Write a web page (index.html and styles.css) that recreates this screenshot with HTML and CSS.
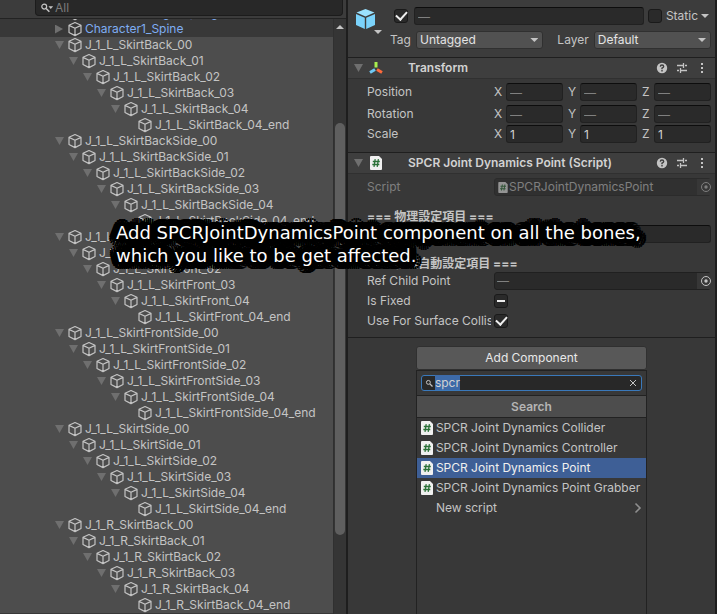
FILE: index.html
```html
<!DOCTYPE html>
<html lang="en">
<head>
<meta charset="utf-8">
<title>Hierarchy and Inspector</title>
<link rel="stylesheet" href="styles.css">
</head>
<body>
<svg class="sprites" aria-hidden="true">
  <symbol id="cube" viewBox="0 0 16 16"><path d="M8 1.5 14 4.2V11.5L8 14.6 2 11.5V4.2ZM2 4.4 8 7.3 14 4.4M8 7.3V14.4" fill="none" stroke="currentColor" stroke-width="1.2" stroke-linejoin="round"/></symbol>
  <symbol id="lens" viewBox="0 0 12 12"><circle cx="4.5" cy="4.5" r="2.6" fill="none" stroke="currentColor" stroke-width="1.3"/><path d="M6.5 6.5 10 10" stroke="currentColor" stroke-width="1.7"/></symbol>
  <symbol id="script" viewBox="0 0 12 14"><path d="M1 0H9L12 3V13Q12 14 11 14H1Q0 14 0 13V1Q0 0 1 0Z" fill="#f0f0f0"/><path d="M5.2 3.2 4 10.8M8.4 3.2 7.2 10.8M2.8 5.5H9.8M2.3 8.5H9.3" stroke="#2b7138" stroke-width="1.3"/></symbol>
  <symbol id="help" viewBox="0 0 12 12"><circle cx="6" cy="6" r="5.2" fill="#c4c4c4"/><path d="M4.3 4.6Q4.4 3 6 3T7.7 4.6Q7.7 5.5 6 6.2V7.3M6 8.1V9.4" fill="none" stroke="#3e3e3e" stroke-width="1.4"/></symbol>
  <symbol id="preset" viewBox="0 0 12 12"><path d="M1 3.5H7M9 3.5H11M7.5 1V6M1 8.5H3M5 8.5H11M4.5 6V11" stroke="#c4c4c4" stroke-width="1.3"/></symbol>
  <symbol id="dots" viewBox="0 0 12 12"><path d="M5 1H7V3H5ZM5 5H7V7H5ZM5 9H7V11H5Z" fill="#c4c4c4"/></symbol>
  <symbol id="target" viewBox="0 0 10 10"><circle cx="5" cy="5" r="4.5" fill="none" stroke="currentColor"/><circle cx="5" cy="5" r="1.7" fill="currentColor"/></symbol>
</svg>
<div class="editor">
  <section class="hierarchy" aria-label="Hierarchy">
    <div class="toolbar">
      <label class="filter">
        <svg class="lens" viewBox="0 0 16 12" aria-hidden="true"><use href="#lens" width="12" height="12"/><path d="M9 4H14L11.500 7Z" fill="currentColor"/></svg>
        <input type="text" placeholder="All" aria-label="Filter objects">
      </label>
    </div>
    <div class="treewrap">
      <div class="treeview"><ul class="tree" id="tree"></ul></div>
      <div class="scrollbar" aria-hidden="true"><span class="up"></span><span class="thumb"></span></div>
    </div>
  </section>

  <section class="inspector" aria-label="Inspector">
    <header class="object">
      <div class="objicon">
        <svg class="bigcube" viewBox="0 0 20 22" aria-hidden="true"><path d="M10 1 19 4.500 10 8.500 1 4.500Z" fill="#9be2ff"/><path d="M0.500 6 9.300 9.800V21L0.500 17Z M19.500 6 10.700 9.800V21L19.500 17Z" fill="#7bd3fb"/></svg>
        <span class="caret"></span>
      </div>
      <div class="objlines">
        <div class="line">
          <input type="checkbox" checked aria-label="Active">
          <input class="field grow" type="text" placeholder="—" aria-label="Name">
          <label class="static"><input type="checkbox"><span>Static</span></label>
          <span class="caret"></span>
        </div>
        <div class="line selects">
          <label for="tag">Tag</label>
          <span class="drop tag"><select id="tag"><option>Untagged</option></select></span>
          <label class="layerlabel" for="layer">Layer</label>
          <span class="drop"><select id="layer"><option>Default</option></select></span>
        </div>
      </div>
    </header>

    <article>
      <header class="comp">
        <span class="fold"></span>
        <svg class="axes" viewBox="0 0 14 14" aria-hidden="true"><path d="M7 1V6.500" stroke="#a8ee4e" stroke-width="3"/><path d="M6 8.500 1 11.500" stroke="#6fc8f5" stroke-width="3"/><path d="M8 8.500 13 11.500" stroke="#ff6a3c" stroke-width="3"/></svg>
        <h2>Transform</h2>
        <svg class="tool"><use href="#help"/></svg><svg class="tool"><use href="#preset"/></svg><svg class="tool"><use href="#dots"/></svg>
      </header>
      <div class="props">
        <div class="prop pos"><span class="name">Position</span><div class="vec">
          <label>X<input class="field" placeholder="—"></label><label>Y<input class="field" placeholder="—"></label><label>Z<input class="field" placeholder="—"></label></div></div>
        <div class="prop"><span class="name">Rotation</span><div class="vec">
          <label>X<input class="field" placeholder="—"></label><label>Y<input class="field" placeholder="—"></label><label>Z<input class="field" placeholder="—"></label></div></div>
        <div class="prop"><span class="name">Scale</span><div class="vec">
          <label>X<input class="field" value="1"></label><label>Y<input class="field" value="1"></label><label>Z<input class="field" value="1"></label></div></div>
      </div>
    </article>

    <article>
      <header class="comp">
        <span class="fold"></span>
        <svg class="doc" aria-hidden="true"><use href="#script"/></svg>
        <h2>SPCR Joint Dynamics Point (Script)</h2>
        <svg class="tool"><use href="#help"/></svg><svg class="tool"><use href="#preset"/></svg><svg class="tool"><use href="#dots"/></svg>
      </header>
      <div class="props last">
        <div class="prop disabled"><label class="name" for="script-ref">Script</label>
          <div class="ref"><svg class="mini" aria-hidden="true"><use href="#script"/></svg><input id="script-ref" value="SPCRJointDynamicsPoint" disabled><svg class="pick" aria-hidden="true"><use href="#target"/></svg></div></div>
        <h3>=== 物理設定項目 ===</h3>
        <div class="prop"><label class="name" for="mass">Mass</label><input class="field grow" id="mass"></div>
        <h3>=== 物理自動設定項目 ===</h3>
        <div class="prop"><label class="name" for="child">Ref Child Point</label>
          <div class="ref"><input id="child" placeholder="—"><svg class="pick" aria-hidden="true"><use href="#target"/></svg></div></div>
        <div class="prop"><label class="name" for="fixed">Is Fixed</label><input class="mixed" id="fixed" type="checkbox"></div>
        <div class="prop"><label class="name" for="surface">Use For Surface Collision</label><input id="surface" type="checkbox" checked></div>
      </div>
    </article>

    <div class="adder">
      <button class="add" type="button">Add Component</button>
      <div class="popup">
        <div class="searchrow"><label class="search"><svg class="glass" aria-hidden="true"><use href="#lens"/></svg><span class="query" contenteditable="true" role="textbox" aria-label="Search components"><mark>spcr</mark></span><svg class="clear" viewBox="0 0 8 8" aria-hidden="true"><path d="M1 1 7 7M7 1 1 7" stroke="#c4c4c4"/></svg></label></div>
        <h4>Search</h4>
        <ul class="results">
          <li><svg class="doc"><use href="#script"/></svg>SPCR Joint Dynamics Collider</li>
          <li><svg class="doc"><use href="#script"/></svg>SPCR Joint Dynamics Controller</li>
          <li class="on"><svg class="doc"><use href="#script"/></svg>SPCR Joint Dynamics Point</li>
          <li><svg class="doc"><use href="#script"/></svg>SPCR Joint Dynamics Point Grabber</li>
          <li class="new">New script<svg class="chev" viewBox="0 0 8 12"><path d="M1.500 1.500 6 6 1.500 10.500" fill="none" stroke="#8f8f8f" stroke-width="1.600"/></svg></li>
        </ul>
      </div>
    </div>
  </section>
  <p class="caption">Add SPCRJointDynamicsPoint component on all the bones,<br>which you like to be get affected.</p>
</div>
<script src="tree.js"></script>
</body>
</html>
```
FILE: styles.css
```css
* { box-sizing: border-box; }
body { margin: 0; background: #383838; color: #c4c4c4; font: 12px/16px Inter, "Noto Sans CJK JP", sans-serif; }
input, select, button { font: inherit; color: inherit; margin: 0; }
h2, h3, h4, p, ul { margin: 0; padding: 0; }
ul { list-style: none; }
svg { flex: none; display: block; }
.sprites { position: absolute; width: 0; height: 0; }
.editor { position: relative; display: grid; grid-template-columns: 346fr 371fr; height: 100vh; overflow: hidden; }

.hierarchy { display: flex; flex-direction: column; min-width: 0; min-height: 0; }
.toolbar { height: 19px; flex: none; padding: 0 3px 0 35px; background: #3c3c3c; border-bottom: 1px solid #232323; }
.filter { display: flex; align-items: center; height: 16px; padding-left: 4px; background: #282828; border: 1px solid #1c1c1c; border-top: 0; border-radius: 0 0 4px 4px; }
.lens { width: 15px; height: 12px; }
.filter input { flex: 1; min-width: 0; height: 15px; padding: 0; border: 0; background: none; outline: 0; }
.filter input::placeholder { color: #7c7c7c; opacity: 1; }
.treewrap { flex: 1; display: flex; min-height: 0; }
.treeview { flex: 1; min-width: 0; display: flex; flex-direction: column; overflow: hidden; }
.tree { margin-top: -14px; }
.row { display: flex; align-items: center; height: 16px; background: #4d4d4d; white-space: nowrap; }
.row.plain { background: #383838; color: #7fadf2; }
.row svg { width: 16px; height: 16px; margin: 0 2px 0 3px; color: #c4c4c4; }
.fold { flex: none; width: 9px; height: 8px; background: #6f6f6f; clip-path: polygon(0 0, 100% 0, 50% 100%); }
.fold.closed { height: 9px; width: 8px; margin-right: 1px; clip-path: polygon(0 0, 100% 50%, 0 100%); }
.fold.none { background: none; }
.d0 { padding-left: 55px; } .d1 { padding-left: 69px; } .d2 { padding-left: 83px; }
.d3 { padding-left: 97px; } .d4 { padding-left: 111px; } .d5 { padding-left: 125px; }
.scrollbar { width: 13px; padding: 6px 1px 0; background: #353535; border-left: 1px solid #303030; display: flex; flex-direction: column; align-items: center; }
.up { width: 8px; height: 4px; background: #c4c4c4; clip-path: polygon(50% 0, 100% 100%, 0 100%); }
.thumb { width: 10px; height: 70%; margin-top: 94px; border-radius: 5px; background: #5f5f5f; }

.inspector { display: flex; flex-direction: column; min-width: 0; border: solid #1e1e1e; border-width: 0 2px; }
.object { display: flex; height: 58px; padding: 7px 4px 0 7px; background: #3c3c3c; border-bottom: 1px solid #1f1f1f; }
.objicon { width: 35px; padding-top: 1px; }
.bigcube { width: 21px; height: 22px; }
.caret { flex: none; display: block; width: 8px; height: 4px; background: #c4c4c4; clip-path: polygon(0 0, 100% 0, 50% 100%); }
.objicon .caret { margin-left: 19px; }
.objlines { flex: 1; min-width: 0; display: flex; flex-direction: column; gap: 6px; }
.line { display: flex; align-items: center; height: 18px; padding-left: 4px; }
.line .field { margin: 0 4px 0 6px; }
.line > .caret { margin: 0 2px 0 3px; }
.static { display: flex; align-items: center; gap: 4px; }
.selects { padding-left: 0; gap: 5px; }
.layerlabel { margin-left: 9px; }
.drop { position: relative; display: flex; flex: 116; min-width: 0; }
.drop.tag { flex: 126; }
.drop::after { content: ""; position: absolute; right: 5px; top: 7px; width: 8px; height: 4px; background: #c4c4c4; clip-path: polygon(0 0, 100% 0, 50% 100%); pointer-events: none; }
select { appearance: none; width: 100%; height: 18px; padding: 0 3px; background: #515151; border: 1px solid #303030; border-radius: 3px; color: #e4e4e4; line-height: 16px; }
.field { width: 100%; min-width: 0; height: 18px; padding: 0 3px; background: #2a2a2a; border: 1px solid #212121; border-top-color: #0d0d0d; border-radius: 3px; outline: 0; color: #d2d2d2; }
.grow { flex: 1; }
::placeholder { color: #808080; opacity: 1; }
input[type=checkbox] { appearance: none; flex: none; display: grid; place-items: center; width: 14px; height: 14px; background: #2a2a2a; border: 1px solid #1a1a1a; border-radius: 3px; }
input[type=checkbox]:checked::after { content: ""; width: 9px; height: 5px; margin-bottom: 3px; border: solid #eee; border-width: 0 0 2px 2px; transform: rotate(-48deg); }
input.mixed::after { content: ""; width: 8px; height: 2px; background: #eee; }

.comp { display: flex; align-items: center; height: 21px; padding: 0 7px 0 6px; background: #3e3e3e; border-bottom: 1px solid #303030; }
.comp .fold { margin-right: 6px; }
.comp .doc, .axes { width: 14px; height: 14px; }
.comp h2 { flex: 1; margin-left: 25px; font-size: 12px; font-weight: 600; line-height: 16px; color: #d2d2d2; }
.tool { width: 12px; height: 12px; margin-left: 8px; }
.props { display: flex; flex-direction: column; gap: 2px; padding: 4px 4px 9px 19px; border-bottom: 1px solid #1f1f1f; }
.props.last { padding-bottom: 7px; }
.prop { display: flex; align-items: center; height: 18px; }
.pos { margin-bottom: 2px; }
.name { flex: none; width: 124px; margin-right: 3px; overflow: hidden; white-space: nowrap; }
.vec { flex: 1; min-width: 0; display: grid; grid-template-columns: repeat(3, 1fr); gap: 5px; }
.vec label { display: grid; grid-template-columns: 12px 1fr; align-items: center; }
.ref { flex: 1; min-width: 0; display: flex; align-items: center; height: 18px; padding-left: 2px; background: #2a2a2a; border: 1px solid #202020; border-radius: 3px; }
.ref input { flex: 1; min-width: 0; height: 16px; padding: 0; background: none; border: 0; outline: 0; }
.pick { width: 14px; height: 16px; margin-right: -1px; padding: 3px 0 3px 4px; background: #373737; }
.mini { width: 12px; height: 11px; }
.disabled { opacity: .5; }
h3 { margin: 11px 0 -2px; font-size: 12px; line-height: 16px; font-weight: 700; height: 16px; }

.adder { width: 63%; flex: 1; margin: 8px auto 0; display: flex; flex-direction: column; min-height: 0; }
.add { height: 24px; flex: none; padding: 0; background: #585858; border: 1px solid #303030; border-radius: 3px; color: #e8e8e8; }
.popup { flex: 1; border: solid #222; border-width: 1px 1px 0; background: #383838; }
.searchrow { padding: 4px; height: 25px; border-bottom: 1px solid #222; }
.search { display: flex; align-items: center; height: 16px; padding: 0 4px 0 3px; border: 1px solid #3a79bb; border-radius: 3px; background: #282828; }
.glass { width: 9px; height: 9px; margin-right: 1px; }
.query { flex: 1; line-height: 14px; outline: 0; }
mark { background: #3d6aa8; color: #d2d2d2; }
.clear { width: 8px; height: 8px; }
h4 { height: 22px; line-height: 21px; text-align: center; font-size: 12px; font-weight: 600; color: #b4b4b4; background: #4d4d4d; border-bottom: 1px solid #222; }
.results li { display: flex; align-items: center; height: 20px; padding: 0 4px; white-space: nowrap; }
.results .doc { width: 12px; height: 14px; margin-right: 3px; }
.results .on { background: #3e5f96; color: #f0f0f0; }
.results .new { padding-left: 19px; justify-content: space-between; }
.chev { width: 8px; height: 12px; }

.caption {
  position: absolute; left: 116px; top: 221px;
  font: 18px/23px "DejaVu Sans", sans-serif; color: #fff; white-space: nowrap;
  text-shadow:
    7px 0 #000, 7px 2px #000, 6px 4px #000, 4px 6px #000, 2px 7px #000,
    0 7px #000, -2px 7px #000, -4px 6px #000, -6px 4px #000, -7px 2px #000,
    -7px 0 #000, -7px -2px #000, -6px -4px #000, -4px -6px #000, -2px -7px #000,
    0 -7px #000, 2px -7px #000, 4px -6px #000, 6px -4px #000, 7px -2px #000,
    5px 0 #000, 4px 3px #000, 0 5px #000, -4px 3px #000,
    -5px 0 #000, -4px -3px #000, 0 -5px #000, 4px -3px #000,
    3px 0 #000, 2px 2px #000, 0 3px #000, -2px 2px #000,
    -3px 0 #000, -2px -2px #000, 0 -3px #000, 2px -2px #000,
    1px 0 #000, -1px 0 #000, 0 1px #000, 0 -1px #000;
}
```
FILE: tree.js
```js
const tree = document.getElementById("tree");

function addRow(name, depth, fold, plain) {
  const li = document.createElement("li");
  li.className = "row d" + depth + (plain ? " plain" : "");
  li.innerHTML = '<span class="fold ' + fold + '"></span><svg aria-hidden="true"><use href="#cube"/></svg><span>' + name + "</span>";
  tree.append(li);
}

addRow("Character1_RightUpLeg", 0, "closed", true);
addRow("Character1_Spine", 0, "closed", true);

for (const chain of ["L_SkirtBack", "L_SkirtBackSide", "L_SkirtFront", "L_SkirtFrontSide", "L_SkirtSide", "R_SkirtBack"]) {
  for (let i = 0; i < 5; i++) addRow("J_1_" + chain + "_0" + i, i, "", false);
  addRow("J_1_" + chain + "_04_end", 5, "none", false);
}
```
